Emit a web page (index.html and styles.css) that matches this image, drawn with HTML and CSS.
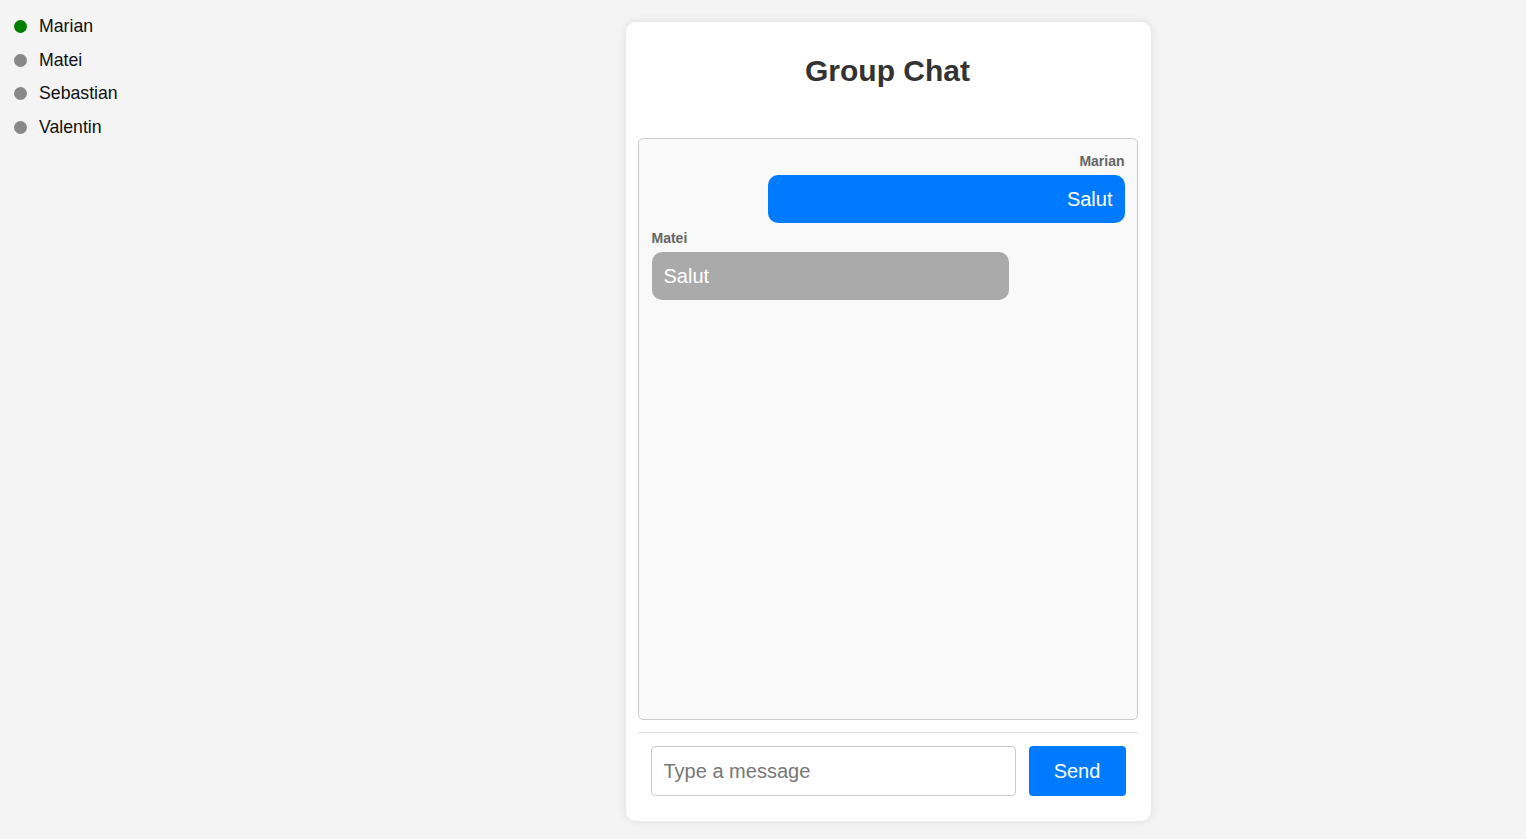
FILE: index.html
```html
<!DOCTYPE html>
<html>
<head>
<meta charset="utf-8">
<link rel="stylesheet" href="styles.css">
</head>
<body>
<div class="page">
  <aside class="sidebar">
    <ul class="users">
      <li class="user"><span class="dot online"></span>Marian</li>
      <li class="user"><span class="dot"></span>Matei</li>
      <li class="user"><span class="dot"></span>Sebastian</li>
      <li class="user"><span class="dot"></span>Valentin</li>
    </ul>
  </aside>
  <main class="main">
    <div class="card">
      <h2 class="title">Group Chat</h2>
      <div class="messages">
        <div class="msg mine">
          <div class="sender">Marian</div>
          <div class="bubble">Salut</div>
        </div>
        <div class="msg other">
          <div class="sender">Matei</div>
          <div class="bubble">Salut</div>
        </div>
      </div>
      <div class="composer">
        <input class="input" type="text" placeholder="Type a message">
        <button class="send">Send</button>
      </div>
    </div>
  </main>
</div>
</body>
</html>
```
FILE: styles.css
```css
* { box-sizing: border-box; }
html, body { margin: 0; padding: 0; }
body {
  background: #f4f4f4;
  font-family: "Liberation Sans", Arial, sans-serif;
  color: #111;
}
.page {
  display: flex;
  min-height: 839px;
}
.sidebar {
  width: 250px;
  flex: none;
  padding: 10px 14px;
}
.users { list-style: none; margin: 0; padding: 0; }
.user {
  display: flex;
  align-items: center;
  gap: 12px;
  font-size: 17.7px;
  line-height: 21.5px;
  padding: 6px 0;
  color: #111;
}
.dot {
  width: 13px;
  height: 13px;
  border-radius: 50%;
  background: #888;
  flex: none;
}
.dot.online { background: #008000; }
.main {
  flex: 1;
  display: flex;
  justify-content: center;
  align-items: flex-start;
  padding-top: 22px;
}
.card {
  width: 525px;
  background: #fff;
  border-radius: 10px;
  box-shadow: 0 0 10px rgba(0,0,0,0.1);
  padding: 12px 13px 12px 12px;
}
.title {
  margin: 20px 0 50px;
  text-align: center;
  font-size: 30px;
  line-height: 34px;
  font-weight: bold;
  color: #333;
}
.messages {
  height: 582px;
  border: 1px solid #ccc;
  border-radius: 5px;
  background: #f9f9f9;
  padding: 14px 12px 13px 13px;
  display: flex;
  flex-direction: column;
}
.msg { display: flex; flex-direction: column; margin-bottom: 7px; }
.msg.mine { align-items: flex-end; }
.msg.other { align-items: flex-start; }
.sender {
  font-size: 14px;
  font-weight: bold;
  color: #666;
  line-height: 16px;
  margin-bottom: 6px;
}
.bubble {
  width: 357px;
  height: 48px;
  border-radius: 10px;
  padding: 0 12px;
  font-size: 20px;
  line-height: 48px;
  color: #fff;
}
.mine .bubble { background: #007bff; text-align: right; }
.other .bubble { background: #aaa; text-align: left; }
.composer {
  margin-top: 12px;
  border-top: 1px solid #ddd;
  padding: 13px 12px 13px 13px;
  display: flex;
  gap: 13px;
}
.input {
  flex: 1;
  height: 50px;
  border: 1px solid #ccc;
  border-radius: 4px;
  padding: 0 12px;
  font-family: "Liberation Sans", Arial, sans-serif;
  font-size: 20px;
  color: #333;
  background: #fff;
  outline: none;
}
.input::placeholder { color: #777; }
.send {
  width: 97px;
  height: 50px;
  border: none;
  border-radius: 4px;
  background: #007bff;
  color: #fff;
  font-family: "Liberation Sans", Arial, sans-serif;
  font-size: 20px;
  cursor: pointer;
}
```
